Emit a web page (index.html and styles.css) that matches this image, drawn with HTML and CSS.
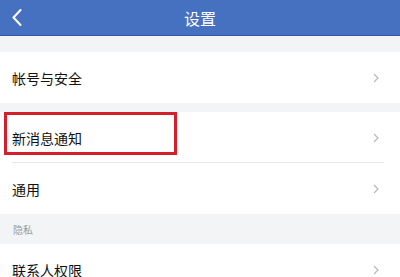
FILE: index.html
```html
<!DOCTYPE html>
<html lang="zh">
<head>
<meta charset="utf-8">
<link rel="stylesheet" href="styles.css">
</head>
<body>
<div class="page">
  <header class="topbar">
    <svg class="back" width="10" height="17" viewBox="0 0 10 17"><path d="M8.5 1 L1.5 8.5 L8.5 16" fill="none" stroke="#fff" stroke-width="2" stroke-linecap="round" stroke-linejoin="round"/></svg>
    <div class="title">设置</div>
  </header>
  <div class="spacer-top"></div>
  <div class="row"><span class="label">帐号与安全</span><svg class="chev" width="6" height="10" viewBox="0 0 6 10"><path d="M1 1 L5 5 L1 9" fill="none" stroke="#b8b8b8" stroke-width="1.2"/></svg></div>
  <div class="spacer-mid"></div>
  <div class="group">
    <div class="row with-line"><span class="label">新消息通知</span><svg class="chev" width="6" height="10" viewBox="0 0 6 10"><path d="M1 1 L5 5 L1 9" fill="none" stroke="#b8b8b8" stroke-width="1.2"/></svg></div>
    <div class="highlight"></div>
    <div class="row"><span class="label">通用</span><svg class="chev" width="6" height="10" viewBox="0 0 6 10"><path d="M1 1 L5 5 L1 9" fill="none" stroke="#b8b8b8" stroke-width="1.2"/></svg></div>
  </div>
  <div class="section">隐私</div>
  <div class="row"><span class="label">联系人权限</span><svg class="chev" width="6" height="10" viewBox="0 0 6 10"><path d="M1 1 L5 5 L1 9" fill="none" stroke="#b8b8b8" stroke-width="1.2"/></svg></div>
</div>
</body>
</html>
```
FILE: styles.css
```css
html, body { margin: 0; padding: 0; background: #f3f4f6; }
body { font-family: "Noto Sans CJK SC", "Noto Sans", sans-serif; width: 400px; height: 277px; overflow: hidden; }
.page { width: 400px; }
.topbar {
  height: 35px;
  background: #4671c0;
  border-bottom: 1px solid #34589e;
  position: relative;
  display: flex;
  align-items: center;
  justify-content: center;
}
.back { position: absolute; left: 12px; top: 9px; }
.title { color: #fff; font-size: 16px; line-height: 1; }
.spacer-top { height: 16px; background: #f3f4f6; }
.spacer-mid { height: 9px; background: #f3f4f6; }
.row {
  height: 51px;
  background: #fff;
  display: flex;
  align-items: center;
  justify-content: space-between;
  padding: 0 21px 0 12px;
  box-sizing: border-box;
  position: relative;
}
.label { font-size: 14px; color: #111; line-height: 1; }
.chev { display: block; }
.with-line::after {
  content: "";
  position: absolute;
  left: 12px;
  right: 16px;
  bottom: 0;
  height: 1px;
  background: #e8e8e8;
}
.group { position: relative; }
.highlight {
  position: absolute;
  left: 4px;
  top: 0;
  width: 167px;
  height: 37px;
  border: 3px solid #d3202b;
}
.section {
  height: 30px;
  display: flex;
  align-items: center;
  padding-left: 13px;
  font-size: 10px;
  color: #9a9a9a;
  background: #f3f4f6;
}
```
